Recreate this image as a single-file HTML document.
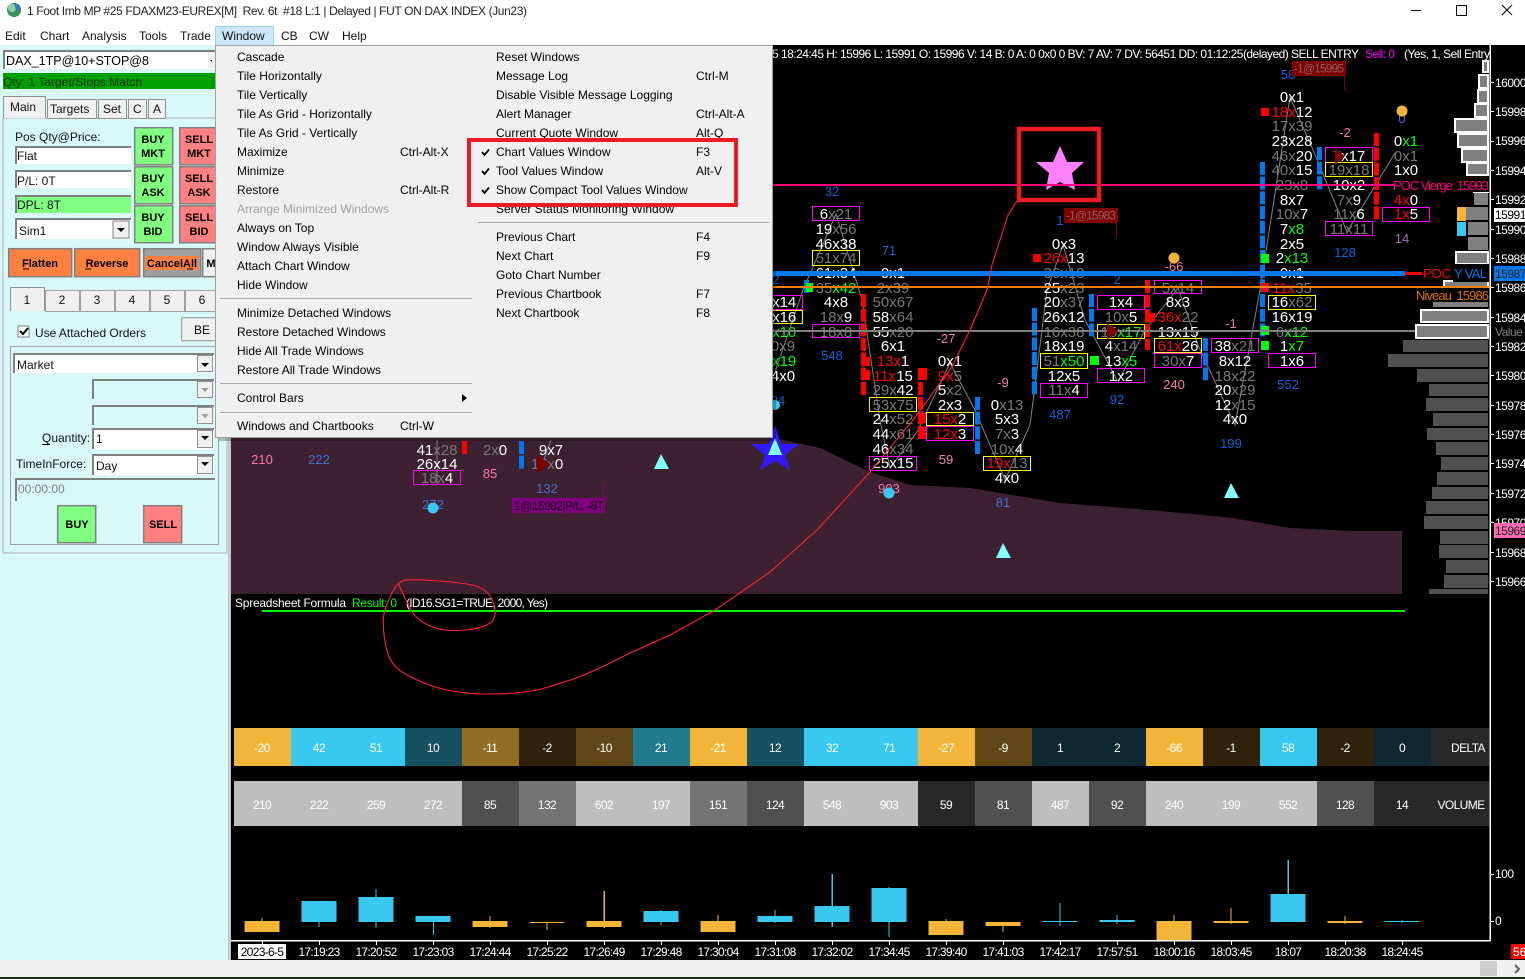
<!DOCTYPE html>
<html><head><meta charset="utf-8"><title>Chart</title>
<style>
html,body{margin:0;padding:0;background:#000;width:1525px;height:979px;overflow:hidden}
svg{display:block;font-family:"Liberation Sans",sans-serif}
text{white-space:pre}
.f text{font-size:15px;fill:#fff;text-anchor:middle}
.g{fill:#787878}.r{fill:#f00}.l{fill:#0f0}.dr{fill:#c00}
.m text{font-size:12px;fill:#000}
.u text{font-size:12px;fill:#111}
.c text{font-size:12px;text-anchor:middle;fill:#fff;letter-spacing:-.6px}
.tl text{font-size:12px;text-anchor:middle;fill:#fff;letter-spacing:-.7px}
.sc text{font-size:12px;fill:#fff;letter-spacing:-.5px}
.b text{font-size:13px;text-anchor:middle;fill:#0a66d8}
.p text{font-size:13px;text-anchor:middle;fill:#f77aa8}
.btn{font-size:11px;font-weight:bold;fill:#000;text-anchor:middle}
</style></head><body>
<svg width="1525" height="979" viewBox="0 0 1525 979" xmlns="http://www.w3.org/2000/svg">
<rect width="1525" height="979" fill="#000"/>
<!-- title -->
<rect width="1525" height="45" fill="#fff"/>
<circle cx="14" cy="10" r="7" fill="#3b8f5a"/><circle cx="12" cy="8" r="4" fill="#8fd0a0"/><path d="M14 3a7 7 0 0 1 7 7h-5z" fill="#2f78b8"/>
<text x="27" y="15" font-size="12" fill="#222" textLength="500">1 Foot Imb MP #25 FDAXM23-EUREX[M]  Rev. 6t  #18 L:1 | Delayed | FUT ON DAX INDEX (Jun23)</text>
<path d="M1411 10.500h10" stroke="#000"/><rect x="1456.500" y="5.500" width="10" height="10" fill="none" stroke="#000"/><path d="M1502 5l10 10M1512 5l-10 10" stroke="#000"/>
<rect x="215.500" y="26.500" width="58" height="19" fill="#cce8ff" stroke="#99d1ff"/>
<g class="u"><text x="5" y="40">Edit</text><text x="40" y="40">Chart</text><text x="82" y="40">Analysis</text><text x="139" y="40">Tools</text><text x="180" y="40">Trade</text><text x="222" y="40">Window</text><text x="281" y="40">CB</text><text x="309" y="40">CW</text><text x="342" y="40">Help</text></g>

<!-- maroon area -->
<polygon points="231,430 770,437 820,448 870,472 910,485 970,488 1060,503 1150,510 1233,518 1290,528 1350,531 1402,531 1402,594 231,594" fill="#3e2130"/>

<!-- status -->
<text x="772" y="58" font-size="12" fill="#fff" textLength="587">5 18:24:45 H: 15996 L: 15991 O: 15996 V: 14 B: 0 A: 0 0x0 0 BV: 7 AV: 7 DV: 56451 DD: 01:12:25(delayed) SELL ENTRY</text>
<text x="1365" y="58" font-size="12" fill="#f0f" textLength="30">Sell: 0</text>
<text x="1404" y="58" font-size="12" fill="#fff" textLength="86">(Yes, 1, Sell Entry</text>

<!-- star -->
<polygon points="1060,146 1067,162 1084,162 1072,173 1075,190 1060,182 1046,190 1049,173 1036,162 1053,162" fill="#ff80ff"/>

<!-- profile bars -->
<g fill="#808080" stroke="#fff" stroke-width="2">
<rect x="1483" y="61" width="5" height="11"/><rect x="1479" y="75" width="9" height="13"/><rect x="1478" y="90" width="10" height="13"/><rect x="1475" y="104" width="13" height="13"/><rect x="1455" y="119" width="33" height="13"/><rect x="1458" y="134" width="30" height="13"/><rect x="1462" y="149" width="26" height="13"/><rect x="1467" y="163" width="21" height="12"/>
<rect x="1474" y="192" width="14" height="13" stroke="none"/><rect x="1465" y="207" width="23" height="13" stroke="none"/><rect x="1468" y="222" width="20" height="13" stroke="none"/><rect x="1468" y="237" width="20" height="13" stroke="none"/><rect x="1456" y="252" width="32" height="12"/><rect x="1444" y="281" width="44" height="13"/><rect x="1433" y="302" width="55" height="5" stroke="none"/>
<rect x="1421" y="310" width="67" height="12"/><rect x="1416" y="325" width="72" height="13"/></g>
<rect x="1473" y="192" width="16" height="1" fill="#fff"/>
<rect x="1457" y="207" width="9" height="14" fill="#f2b53a"/><rect x="1457" y="222" width="9" height="14" fill="#38c8f0"/>
<g fill="#505050">
<rect x="1403" y="340" width="85" height="12"/><rect x="1388" y="354" width="100" height="13"/><rect x="1417" y="369" width="71" height="13"/><rect x="1429" y="384" width="59" height="12"/><rect x="1426" y="398" width="62" height="13"/><rect x="1433" y="413" width="55" height="13"/><rect x="1427" y="428" width="61" height="12"/><rect x="1436" y="442" width="52" height="13"/><rect x="1441" y="457" width="47" height="13"/><rect x="1437" y="472" width="51" height="13"/><rect x="1432" y="487" width="56" height="12"/><rect x="1426" y="501" width="62" height="13"/><rect x="1424" y="516" width="64" height="13"/><rect x="1440" y="531" width="48" height="13"/><rect x="1439" y="545" width="49" height="13"/><rect x="1446" y="560" width="42" height="13"/><rect x="1444" y="575" width="44" height="13"/><rect x="1429" y="589" width="59" height="5"/></g>

<!-- thin zigzag lines -->
<g fill="none" stroke="#808080" stroke-width="1">
<polyline points="775,372 803,290 836,214 862,300 880,420 890,468 917,432 950,363 975,410 1005,480 1030,425 1047,290 1063,245 1085,320 1118,382 1145,330 1178,288 1198,345 1235,425 1260,290 1290,97 1313,150 1347,232 1395,153"/>
<polyline points="437,440 437,485" /><polyline points="551,440 540,470"/>
</g>

<!-- pink/blue labels -->
<g class="p">
<text x="262" y="464">210</text><text x="490" y="478">85</text><text x="946" y="464">59</text><text x="946" y="343">-27</text><text x="1003" y="387">-9</text><text x="1174" y="271">-66</text><text x="1231" y="328">-1</text><text x="1345" y="137">-2</text><text x="1174" y="389" >240</text><text x="889" y="493">903</text></g>
<g class="b">
<text x="319" y="464" style="fill:#3f6fd8">222</text><text x="433" y="509" style="fill:#3f6fd8">272</text><text x="547" y="493" style="fill:#3f6fd8">132</text><text x="832" y="360">548</text><text x="1003" y="507" style="fill:#3f6fd8">81</text><text x="1060" y="419">487</text><text x="1117" y="404">92</text><text x="1231" y="448">199</text><text x="1288" y="389">552</text><text x="1345" y="257">128</text><text x="889" y="255">71</text><text x="832" y="196">32</text><text x="1060" y="225">1</text><text x="1117" y="284">2</text><text x="1288" y="79">58</text><text x="1402" y="123" style="fill:#4a6fd0">0</text><text x="1402" y="243" style="fill:#a070c0">14</text><text x="778" y="405">34</text><text x="776" y="284">2</text></g>

<!-- bars -->
<g fill="none" stroke-width="5" stroke-dasharray="13 1.67">
<g stroke="#0078f0"><path d="M1034.500 308V396M1091.500 294V337M977.500 397V455M1205.500 338V381M1262.500 162V337M1319.500 147V191M521.500 441V469M806.500 280V293"/></g>
<g stroke="#f00"><path d="M1376.500 133V220M863.500 294V396M920.500 382V439M1147.500 280V350M464.500 441V455"/></g>
</g>
<g fill="#f00"><rect x="861" y="357" width="9" height="9"/><rect x="861" y="370" width="9" height="10"/><rect x="918" y="368" width="9" height="12"/><rect x="918" y="413" width="9" height="10"/><rect x="918" y="427" width="9" height="12"/><rect x="1033" y="254" width="8" height="8"/><rect x="1261" y="108" width="8" height="8"/><rect x="1261" y="283" width="8" height="9"/><rect x="1147" y="313" width="8" height="9"/></g>
<g fill="#0f0"><rect x="1261" y="254" width="8" height="9"/><rect x="1261" y="326" width="8" height="9"/><rect x="1261" y="341" width="8" height="9"/><rect x="1090" y="356" width="9" height="9"/><rect x="806" y="283" width="7" height="9"/></g>

<!-- boxes -->
<g fill="none" stroke-width="1">
<g stroke="#ff00ff">
<rect x="812.500" y="206.500" width="47" height="14"/><rect x="812.500" y="324.500" width="47" height="13"/><rect x="869.500" y="456.500" width="47" height="14"/><rect x="926.500" y="426.500" width="47" height="14"/><rect x="1040.500" y="383.500" width="47" height="14"/><rect x="1097.500" y="295.500" width="47" height="14"/><rect x="1097.500" y="368.500" width="47" height="14"/><rect x="1154.500" y="280.500" width="47" height="13"/><rect x="1154.500" y="353.500" width="47" height="14"/><rect x="1211.500" y="338.500" width="47" height="14"/><rect x="1268.500" y="353.500" width="47" height="14"/><rect x="1325.500" y="147.500" width="47" height="15"/><rect x="1325.500" y="221.500" width="47" height="14"/><rect x="1382.500" y="207.500" width="47" height="14"/><rect x="755.500" y="295.500" width="47" height="14"/><rect x="413.500" y="470.500" width="47" height="14"/></g>
<g stroke="#ffff00">
<rect x="812.500" y="250.500" width="47" height="15"/><rect x="869.500" y="397.500" width="47" height="14"/><rect x="926.500" y="412.500" width="47" height="13"/><rect x="983.500" y="456.500" width="47" height="14"/><rect x="1040.500" y="353.500" width="47" height="15"/><rect x="1097.500" y="324.500" width="47" height="14"/><rect x="1154.500" y="338.500" width="47" height="14"/><rect x="1268.500" y="295.500" width="47" height="14"/><rect x="1325.500" y="162.500" width="47" height="14"/><rect x="755.500" y="310.500" width="47" height="13"/></g>
</g>

<!-- footprint text -->
<g class="f">
<text x="780" y="307">5x14</text><text x="780" y="322">8x16</text><text x="780" y="337" style="fill:#0f0">1x10</text><text x="783" y="351"><tspan class="g">0x9</tspan></text><text x="780" y="366"><tspan class="l">7x19</tspan></text><text x="783" y="381">4x0</text>
<text x="437" y="455">41<tspan class="g">x28</tspan></text><text x="437" y="469">26x14</text><text x="437" y="483"><tspan class="g">18x</tspan>4</text>
<text x="495" y="455"><tspan class="g">2x</tspan>0</text><text x="551" y="455">9x7</text><text x="547" y="469"><tspan class="g">17</tspan><tspan class="g">x</tspan>0</text>

<text x="836" y="219">6<tspan class="g">x21</tspan></text><text x="836" y="234">19<tspan class="g">x56</tspan></text><text x="836" y="249">46x38</text><text x="836" y="263"><tspan class="g">51x74</tspan></text><text x="836" y="278">61x34</text><text x="836" y="293"><tspan class="g">35</tspan><tspan class="l">x42</tspan></text><text x="836" y="307">4x8</text><text x="836" y="322"><tspan class="g">18x</tspan>9</text><text x="836" y="337"><tspan class="g">18x8</tspan></text>

<text x="893" y="278">0x1</text><text x="893" y="293"><tspan class="g">2x39</tspan></text><text x="893" y="307"><tspan class="g">50x67</tspan></text><text x="893" y="322">58<tspan class="g">x64</tspan></text><text x="893" y="337">55<tspan class="g">x20</tspan></text><text x="893" y="351">6x1</text><text x="893" y="366"><tspan class="r">13x</tspan>1</text><text x="893" y="381"><tspan class="r">11x</tspan>15</text><text x="893" y="395"><tspan class="g">29x</tspan>42</text><text x="893" y="410"><tspan class="g">53x75</tspan></text><text x="893" y="424">24<tspan class="g">x52</tspan></text><text x="893" y="439">44<tspan class="g">x61</tspan></text><text x="893" y="454">46<tspan class="g">x34</tspan></text><text x="893" y="468">25x15</text>

<text x="950" y="366">0x1</text><text x="950" y="381"><tspan class="r">9x</tspan><tspan class="g">5</tspan></text><text x="950" y="395">5<tspan class="g">x2</tspan></text><text x="950" y="410">2x3</text><text x="950" y="424"><tspan class="r">15x</tspan>2</text><text x="950" y="439"><tspan class="r">12x</tspan>3</text>

<text x="1007" y="410">0<tspan class="g">x13</tspan></text><text x="1007" y="424">5x3</text><text x="1007" y="439"><tspan class="g">7x</tspan>3</text><text x="1007" y="454"><tspan class="g">10x</tspan>4</text><text x="1007" y="468"><tspan class="r">19x</tspan><tspan class="g">13</tspan></text><text x="1007" y="483">4x0</text>

<text x="1064" y="249">0x3</text><text x="1064" y="263"><tspan class="r">26x</tspan>13</text><text x="1064" y="278"><tspan class="g">36x18</tspan></text><text x="1064" y="293">25<tspan class="g">x23</tspan></text><text x="1064" y="307">20<tspan class="g">x37</tspan></text><text x="1064" y="322">26x12</text><text x="1064" y="337"><tspan class="g">16x38</tspan></text><text x="1064" y="351">18x19</text><text x="1064" y="366"><tspan class="g">51</tspan><tspan class="l">x50</tspan></text><text x="1064" y="381">12x5</text><text x="1064" y="395"><tspan class="g">11x</tspan>4</text>

<text x="1121" y="307">1x4</text><text x="1121" y="322"><tspan class="g">10x</tspan>5</text><text x="1121" y="337"><tspan class="g">15</tspan><tspan class="l">x17</tspan></text><text x="1121" y="351">4<tspan class="g">x14</tspan></text><text x="1121" y="366">13<tspan class="l">x5</tspan></text><text x="1121" y="381">1x2</text>

<text x="1178" y="293"><tspan class="g">5x14</tspan></text><text x="1178" y="307">8x3</text><text x="1178" y="322"><tspan class="r">36x</tspan><tspan class="g">22</tspan></text><text x="1178" y="337">13x15</text><text x="1178" y="351"><tspan class="r">61x</tspan>26</text><text x="1178" y="366"><tspan class="g">30x</tspan>7</text>

<text x="1235" y="351">38<tspan class="g">x21</tspan></text><text x="1235" y="366">8x12</text><text x="1235" y="381"><tspan class="g">18x22</tspan></text><text x="1235" y="395">20<tspan class="g">x29</tspan></text><text x="1235" y="410">12<tspan class="g">x15</tspan></text><text x="1235" y="424">4x0</text>

<text x="1292" y="102">0x1</text><text x="1292" y="117"><tspan class="r">18x</tspan>12</text><text x="1292" y="131"><tspan class="g">17x39</tspan></text><text x="1292" y="146">23x28</text><text x="1292" y="161"><tspan class="g">46x</tspan>20</text><text x="1292" y="175"><tspan class="g">40x</tspan>15</text><text x="1292" y="190"><tspan class="g">23x8</tspan></text><text x="1292" y="205">8x7</text><text x="1292" y="219"><tspan class="g">10x</tspan>7</text><text x="1292" y="234">7<tspan class="l">x8</tspan></text><text x="1292" y="249">2x5</text><text x="1292" y="263">2<tspan class="l">x13</tspan></text><text x="1292" y="278">0x1</text><text x="1292" y="293"><tspan class="r">11x</tspan><tspan class="g">35</tspan></text><text x="1292" y="307">16<tspan class="g">x62</tspan></text><text x="1292" y="322">16x19</text><text x="1292" y="337"><tspan class="g">6</tspan><tspan class="l">x12</tspan></text><text x="1292" y="351">1<tspan class="l">x7</tspan></text><text x="1292" y="366">1x6</text>

<text x="1349" y="161"><tspan class="g">7</tspan>x17</text><text x="1349" y="175"><tspan class="g">19x18</tspan></text><text x="1349" y="190">10x2</text><text x="1349" y="205"><tspan class="g">7x</tspan>9</text><text x="1349" y="219"><tspan class="g">11x</tspan>6</text><text x="1349" y="234"><tspan class="g">11x11</tspan></text>

<text x="1406" y="146">0<tspan class="l">x1</tspan></text><text x="1406" y="161"><tspan class="g">0x1</tspan></text><text x="1406" y="175">1x0</text><text x="1406" y="205"><tspan class="r">4x</tspan>0</text><text x="1406" y="219"><tspan class="r">1x</tspan>5</text>
</g>

<!-- horizontal lines over footprint text -->
<rect x="772" y="184" width="623" height="2" fill="#ff0080"/>
<rect x="231" y="271" width="1174" height="5" fill="#0078f0"/>
<rect x="1405" y="272" width="17" height="3" fill="#f00"/>
<rect x="231" y="286" width="1259" height="2" fill="#ff8000"/>
<rect x="231" y="330" width="1184" height="2" fill="#808080"/>
<rect x="1489.500" y="45" width="1.500" height="896" fill="#fff"/>

<!-- dark red arrows -->
<g fill="#800000"><polygon points="1335,148 1345,156 1335,165"/><polygon points="1107,323 1118,331 1107,340"/><polygon points="537,455 550,464 537,473"/></g>

<!-- order labels -->
<rect x="1064" y="208" width="54" height="15" fill="#800000"/><path d="M1116.500 223v15" stroke="#800000"/>
<text x="1066" y="219.500" font-size="12" fill="#8a6060" textLength="50">-1@15983</text>
<rect x="1292" y="61" width="54" height="15" fill="#800000"/><path d="M1344.500 76v15" stroke="#800000"/>
<text x="1294" y="72.500" font-size="12" fill="#8a6060" textLength="50">-1@15995</text>
<rect x="512" y="498" width="93" height="15" fill="#800080"/><path d="M603.500 484v14" stroke="#800080"/>
<text x="514" y="510" font-size="12" fill="#111" textLength="90">1@15982|P/L: -8T</text>

<!-- markers -->
<circle cx="433" cy="508" r="5.500" fill="#38c8f0"/><circle cx="889" cy="493" r="5.500" fill="#38c8f0"/><circle cx="775" cy="405" r="5" fill="#38c8f0"/>
<circle cx="1402" cy="111" r="5.500" fill="#f2b53a"/><circle cx="1174" cy="258" r="5.500" fill="#f2b53a"/>
<polygon points="775,425 781,444 799,444 785,455 790,470 775,461 760,470 765,455 751,444 769,444" fill="#3018ff"/>
<polygon points="775,438 782,455 768,455" fill="#80ffff"/>
<g fill="#80ffff"><polygon points="661,454 669,469 654,469"/><polygon points="1003,543 1011,558 996,558"/><polygon points="1231,483 1239,498 1224,498"/></g>

<!-- right overlay labels -->
<text x="1393" y="190" font-size="13" fill="#ff0080" textLength="96">POC Vierge  15993</text>
<text x="1423" y="278" font-size="13" fill="#f00">POC</text>
<rect x="1453" y="264" width="36" height="18" fill="#000"/>
<text x="1454" y="278" font-size="13" fill="#0078f0" textLength="33">Y VAL</text>
<rect x="1415" y="288" width="74" height="14" fill="#000"/>
<text x="1416" y="300" font-size="13" fill="#e07000" textLength="73">Niveau  15986</text>

<!-- star box -->
<rect x="1019" y="129" width="80" height="71" fill="none" stroke="#ed1c24" stroke-width="4.500"/>

<!-- scale -->
<g class="sc">
<text x="1495" y="87">16000</text><text x="1495" y="116">15998</text><text x="1495" y="145">15996</text><text x="1495" y="175">15994</text><text x="1495" y="204">15992</text><text x="1495" y="234">15990</text><text x="1495" y="263">15988</text><text x="1495" y="292">15986</text><text x="1495" y="322">15984</text><text x="1495" y="351">15982</text><text x="1495" y="380">15980</text><text x="1495" y="410">15978</text><text x="1495" y="439">15976</text><text x="1495" y="468">15974</text><text x="1495" y="498">15972</text><text x="1495" y="527">15970</text><text x="1495" y="557">15968</text><text x="1495" y="586">15966</text><text x="1495" y="336" style="fill:#808080">Value</text>
<text x="1495" y="878">100</text><text x="1495" y="925">0</text>
</g>
<g stroke="#fff"><path d="M1491 82.500h3M1491 111.500h3M1491 141.500h3M1491 170.500h3M1491 199.500h3M1491 229.500h3M1491 258.500h3M1491 287.500h3M1491 317.500h3M1491 346.500h3M1491 375.500h3M1491 405.500h3M1491 434.500h3M1491 463.500h3M1491 493.500h3M1491 522.500h3M1491 552.500h3M1491 581.500h3M1491 874.500h3M1491 921.500h3"/></g>
<rect x="1494" y="208" width="31" height="14" fill="#fff"/><text x="1495" y="219" font-size="12" letter-spacing="-.5" fill="#000">15991</text>
<rect x="1494" y="266" width="31" height="15" fill="#0078f0"/><text x="1495" y="278" font-size="12" letter-spacing="-.5" fill="#222">15987</text>
<rect x="1494" y="523" width="31" height="15" fill="#ff69b4"/><text x="1495" y="535" font-size="12" letter-spacing="-.5" fill="#222">15969</text>

<!-- lower pane -->
<text x="235" y="607" font-size="12" fill="#fff" textLength="111">Spreadsheet Formula</text>
<text x="352" y="607" font-size="12" fill="#0f0" textLength="45">Result: 0</text>
<text x="406" y="607" font-size="12" fill="#fff" textLength="142">(ID16.SG1=TRUE, 2000, Yes)</text>
<rect x="262" y="610" width="1143" height="2" fill="#0f0"/>

<!-- freehand red -->
<path fill="none" stroke="#ff2030" stroke-width="1.100" stroke-linejoin="round" d="M1017,201 L1008,215 L1000,240 L992,265 L987,290 L970,330 L952,367 L913,420 L870,472 L818,529 L770,572 L715,610 L670,635 L630,653 Q597,670 580,676.500 Q563,683 543,688.500 Q523,694 488,694 Q453,694 428,684.500 Q403,675 395,666 Q387,657 384.500,638.500 Q382,620 384.500,611.500 Q387,603 392,593 Q397,583 402,581 Q407,579 432,580.500 Q457,582 472,585 Q487,588 492.500,600.500 Q498,613 492.500,620.500 Q487,628 465,630 Q443,632 430,626 Q417,620 412,611.500 Q407,603 398,583"/>

<!-- delta row -->
<g>
<rect x="234" y="728" width="57" height="38" fill="#f2b53a"/><rect x="291" y="728" width="114" height="38" fill="#38c8f0"/><rect x="405" y="728" width="57" height="38" fill="#17505f"/><rect x="462" y="728" width="57" height="38" fill="#926e22"/><rect x="519" y="728" width="57" height="38" fill="#31230b"/><rect x="576" y="728" width="57" height="38" fill="#5f4716"/><rect x="633" y="728" width="57" height="38" fill="#227a91"/><rect x="690" y="728" width="57" height="38" fill="#f2b53a"/><rect x="747" y="728" width="57" height="38" fill="#17505f"/><rect x="804" y="728" width="114" height="38" fill="#38c8f0"/><rect x="918" y="728" width="57" height="38" fill="#f2b53a"/><rect x="975" y="728" width="57" height="38" fill="#5f4716"/><rect x="1032" y="728" width="114" height="38" fill="#0d2830"/><rect x="1146" y="728" width="57" height="38" fill="#f2b53a"/><rect x="1203" y="728" width="57" height="38" fill="#31230b"/><rect x="1260" y="728" width="57" height="38" fill="#38c8f0"/><rect x="1317" y="728" width="57" height="38" fill="#31230b"/><rect x="1374" y="728" width="57" height="38" fill="#0d2830"/><rect x="1431" y="728" width="58" height="38" fill="#282828"/>
<rect x="234" y="781" width="228" height="45" fill="#bebebe"/><rect x="462" y="781" width="57" height="45" fill="#505050"/><rect x="519" y="781" width="57" height="45" fill="#747474"/><rect x="576" y="781" width="114" height="45" fill="#bebebe"/><rect x="690" y="781" width="57" height="45" fill="#747474"/><rect x="747" y="781" width="57" height="45" fill="#505050"/><rect x="804" y="781" width="114" height="45" fill="#bebebe"/><rect x="918" y="781" width="57" height="45" fill="#282828"/><rect x="975" y="781" width="57" height="45" fill="#505050"/><rect x="1032" y="781" width="57" height="45" fill="#bebebe"/><rect x="1089" y="781" width="57" height="45" fill="#505050"/><rect x="1146" y="781" width="171" height="45" fill="#bebebe"/><rect x="1317" y="781" width="57" height="45" fill="#505050"/><rect x="1374" y="781" width="115" height="45" fill="#282828"/>
</g>
<g class="c">
<text x="262" y="752">-20</text><text x="319" y="752">42</text><text x="376" y="752">51</text><text x="433" y="752">10</text><text x="490" y="752">-11</text><text x="547" y="752">-2</text><text x="604" y="752">-10</text><text x="661" y="752">21</text><text x="718" y="752">-21</text><text x="775" y="752">12</text><text x="832" y="752">32</text><text x="889" y="752">71</text><text x="946" y="752">-27</text><text x="1003" y="752">-9</text><text x="1060" y="752">1</text><text x="1117" y="752">2</text><text x="1174" y="752">-66</text><text x="1231" y="752">-1</text><text x="1288" y="752">58</text><text x="1345" y="752">-2</text><text x="1402" y="752">0</text><text x="1468" y="752">DELTA</text>
<text x="262" y="809">210</text><text x="319" y="809">222</text><text x="376" y="809">259</text><text x="433" y="809">272</text><text x="490" y="809">85</text><text x="547" y="809">132</text><text x="604" y="809">602</text><text x="661" y="809">197</text><text x="718" y="809">151</text><text x="775" y="809">124</text><text x="832" y="809">548</text><text x="889" y="809">903</text><text x="946" y="809">59</text><text x="1003" y="809">81</text><text x="1060" y="809">487</text><text x="1117" y="809">92</text><text x="1174" y="809">240</text><text x="1231" y="809">199</text><text x="1288" y="809">552</text><text x="1345" y="809">128</text><text x="1402" y="809">14</text><text x="1461" y="809">VOLUME</text>
</g>

<!-- candles -->
<g fill="#f2b53a">
<rect x="244.500" y="921" width="35" height="11"/><rect x="261.500" y="918" width="1" height="3"/>
<rect x="472.500" y="921" width="35" height="6"/><rect x="489.500" y="916" width="1" height="12"/>
<rect x="529.500" y="922" width="35" height="1"/><rect x="546.500" y="923" width="1" height="7"/>
<rect x="586.500" y="921" width="35" height="6"/><rect x="603.500" y="891" width="1.500" height="37"/>
<rect x="700.500" y="921" width="35" height="11"/><rect x="717.500" y="915" width="1" height="6"/>
<rect x="928.500" y="921" width="35" height="14"/><rect x="945.500" y="919" width="1" height="2"/>
<rect x="985.500" y="922" width="35" height="4"/><rect x="1002.500" y="926" width="1" height="6"/>
<rect x="1156.500" y="921" width="35" height="19"/><rect x="1173.500" y="915" width="1" height="6"/>
<rect x="1213.500" y="921" width="35" height="2"/><rect x="1230.500" y="908" width="1" height="16"/>
<rect x="1327.500" y="921" width="35" height="2"/><rect x="1344.500" y="916" width="1" height="8"/>
</g>
<g fill="#38c8f0">
<rect x="301.500" y="901" width="35" height="21"/><rect x="318.500" y="922" width="1" height="5"/>
<rect x="358.500" y="897" width="35" height="25"/><rect x="375.500" y="889" width="1" height="39"/>
<rect x="415.500" y="916" width="35" height="6"/><rect x="433" y="922" width="1" height="13"/>
<rect x="643.500" y="911" width="35" height="11"/><rect x="660.500" y="910" width="1" height="15"/>
<rect x="757.500" y="916" width="35" height="6"/><rect x="774.500" y="910" width="1" height="13"/>
<rect x="814.500" y="906" width="35" height="16"/><rect x="831.500" y="874" width="1.500" height="53"/>
<rect x="871.500" y="888" width="35" height="34"/><rect x="888.500" y="887" width="1" height="50"/>
<rect x="1042.500" y="921" width="35" height="1"/><rect x="1059.500" y="903" width="1" height="23"/>
<rect x="1099.500" y="920" width="35" height="2"/><rect x="1116.500" y="915" width="1" height="9"/>
<rect x="1270.500" y="894" width="35" height="28"/><rect x="1287.500" y="860" width="1.500" height="34"/>
<rect x="1384.500" y="921" width="35" height="1"/><rect x="1401.500" y="920" width="1" height="3"/>
</g>

<!-- time axis -->
<rect x="231" y="940" width="1260" height="1.500" fill="#fff"/>
<path stroke="#fff" d="M262.500 941v4M319.500 941v4M376.500 941v4M433.500 941v4M490.500 941v4M547.500 941v4M604.500 941v4M661.500 941v4M718.500 941v4M775.500 941v4M832.500 941v4M889.500 941v4M946.500 941v4M1003.500 941v4M1060.500 941v4M1117.500 941v4M1174.500 941v4M1231.500 941v4M1288.500 941v4M1345.500 941v4M1402.500 941v4"/>
<rect x="238" y="944" width="48" height="15" fill="#fff"/>
<g class="tl">
<text x="262" y="956" style="fill:#000">2023-6-5</text><text x="319" y="956">17:19:23</text><text x="376" y="956">17:20:52</text><text x="433" y="956">17:23:03</text><text x="490" y="956">17:24:44</text><text x="547" y="956">17:25:22</text><text x="604" y="956">17:26:49</text><text x="661" y="956">17:29:48</text><text x="718" y="956">17:30:04</text><text x="775" y="956">17:31:08</text><text x="832" y="956">17:32:02</text><text x="889" y="956">17:34:45</text><text x="946" y="956">17:39:40</text><text x="1003" y="956">17:41:03</text><text x="1060" y="956">17:42:17</text><text x="1117" y="956">17:57:51</text><text x="1174" y="956">18:00:16</text><text x="1231" y="956">18:03:45</text><text x="1288" y="956">18:07</text><text x="1345" y="956">18:20:38</text><text x="1402" y="956">18:24:45</text></g>
<rect x="1511" y="944" width="14" height="15" fill="#f00"/><text x="1513" y="956" font-size="12" fill="#fff">56</text>

<!-- scrollbar -->
<rect x="0" y="960" width="1525" height="17" fill="#f0f0f0"/>
<rect x="1480" y="961" width="17" height="15" fill="#cdcdcd"/>
<path d="M1515 965l4 4-4 4" fill="none" stroke="#606060" stroke-width="2"/>
<rect x="0" y="977" width="1525" height="2" fill="#1a2a12"/>

<!-- left panel -->
<rect x="0" y="45" width="228" height="915" fill="#d9f9f9"/>
<rect x="228" y="45" width="3" height="915" fill="#c8c8c8"/>
<rect x="3" y="50" width="212" height="19" fill="#808080"/><rect x="5" y="52" width="210" height="17" fill="#fff"/>
<text x="6" y="65" font-size="12.500" fill="#000">DAX_1TP@10+STOP@8</text>
<rect x="208" y="52" width="7" height="16" fill="#f0f0f0"/><path d="M212 60l-2 0 2 2z" fill="#000"/>
<rect x="3" y="73" width="213" height="16" fill="#00a000"/>
<text x="3" y="86" font-size="12" fill="#003000" textLength="139">Qty: 1 Target/Stops Match</text>

<!-- tabs -->
<rect x="3" y="118" width="224" height="435" fill="#d9f9f9" stroke="#b0b0b0"/>
<g fill="#f0f0f0" stroke="#909090">
<rect x="47.500" y="99.500" width="49" height="19"/><rect x="98.500" y="99.500" width="28" height="19"/><rect x="128.500" y="99.500" width="18" height="19"/><rect x="148.500" y="99.500" width="17" height="19"/></g>
<path d="M3.500 118V96.500H45.500V118" fill="#f0f0f0" stroke="#909090"/>
<g class="u">
<text x="10" y="111">Main</text><text x="50" y="113">Targets</text><text x="103" y="113">Set</text><text x="133" y="113">C</text><text x="153" y="113">A</text>
<text x="15" y="141">Pos Qty@Price:</text>
</g>
<rect x="15" y="146" width="116" height="18" fill="#808080"/><rect x="17" y="148" width="114" height="16" fill="#fff"/>
<rect x="15" y="170" width="116" height="18" fill="#808080"/><rect x="17" y="172" width="114" height="16" fill="#fff"/>
<rect x="15" y="195" width="116" height="18" fill="#808080"/><rect x="17" y="197" width="114" height="16" fill="#80ff80"/>
<rect x="15" y="218" width="116" height="21" fill="#808080"/><rect x="17" y="220" width="114" height="19" fill="#fff"/>
<rect x="113" y="221" width="16" height="17" fill="#f0f0f0" stroke="#808080"/><polygon points="117,228 125,228 121,232" fill="#000"/>
<g class="u"><text x="17" y="160">Flat</text><text x="17" y="185">P/L: 0T</text><text x="17" y="209">DPL: 8T</text><text x="19" y="235">Sim1</text></g>

<!-- trade buttons -->
<g stroke="#808080" stroke-width="1.500">
<rect x="134.700" y="127.700" width="38" height="37" fill="#80ff80"/><rect x="134.700" y="166.700" width="38" height="37" fill="#80ff80"/><rect x="134.700" y="205.700" width="38" height="37" fill="#80ff80"/>
<rect x="179.700" y="127.700" width="38" height="37" fill="#ff8080"/><rect x="179.700" y="166.700" width="38" height="37" fill="#ff8080"/><rect x="179.700" y="205.700" width="38" height="37" fill="#ff8080"/></g>
<text class="btn" x="153" y="143">BUY</text><text class="btn" x="153" y="157">MKT</text><text class="btn" x="153" y="182">BUY</text><text class="btn" x="153" y="196">ASK</text><text class="btn" x="153" y="221">BUY</text><text class="btn" x="153" y="235">BID</text>
<text class="btn" x="199" y="143">SELL</text><text class="btn" x="199" y="157">MKT</text><text class="btn" x="199" y="182">SELL</text><text class="btn" x="199" y="196">ASK</text><text class="btn" x="199" y="221">SELL</text><text class="btn" x="199" y="235">BID</text>

<g stroke="#808080" stroke-width="1.500">
<rect x="8.700" y="248.700" width="63" height="28" fill="#ff8040"/><rect x="74.700" y="248.700" width="65" height="28" fill="#ff8040"/><rect x="143.700" y="248.700" width="57" height="28" fill="#a0a0a0"/><rect x="202.700" y="248.700" width="14" height="28" fill="#f0f0f0"/></g>
<rect x="145" y="256" width="53" height="14" fill="#ff8040"/>
<text class="btn" x="40" y="267">Flatten</text><text class="btn" x="107" y="267">Reverse</text><text class="btn" x="172" y="267">CancelAll</text><text class="btn" x="211" y="267" font-size="12">M</text>
<path stroke="#000" d="M23 269h6M85 269h6M187 269h6"/>

<!-- numbers -->
<g fill="#f0f0f0" stroke="#a0a0a0">
<rect x="45.500" y="290.500" width="34" height="21"/><rect x="80.500" y="290.500" width="34" height="21"/><rect x="115.500" y="290.500" width="34" height="21"/><rect x="150.500" y="290.500" width="34" height="21"/><rect x="185.500" y="290.500" width="30" height="21"/></g>
<path d="M10.500 311V287.500H44.500V311" fill="#f0f0f0" stroke="#909090"/>
<g class="u" text-anchor="middle"><text x="27" y="304">1</text><text x="62" y="304">2</text><text x="97" y="304">3</text><text x="132" y="304">4</text><text x="167" y="304">5</text><text x="202" y="304">6</text></g>
<rect x="181.700" y="317.700" width="34" height="23" fill="#f0f0f0" stroke="#909090"/><text x="194" y="334" font-size="12" fill="#000">BE</text>
<rect x="18" y="326" width="11" height="11" fill="#fff" stroke="#808080"/><path d="M20 331l3 3 5-6" fill="none" stroke="#000" stroke-width="2"/>
<text x="35" y="337" font-size="12" fill="#111" textLength="111">Use Attached Orders</text>

<rect x="10.500" y="346.500" width="208" height="198" fill="none" stroke="#a0a0a0"/>
<rect x="13" y="353" width="201" height="20" fill="#808080"/><rect x="15" y="355" width="199" height="18" fill="#fff"/>
<rect x="92" y="379" width="122" height="20" fill="#808080"/><rect x="94" y="381" width="120" height="18" fill="#d9f9f9"/>
<rect x="92" y="405" width="122" height="20" fill="#808080"/><rect x="94" y="407" width="120" height="18" fill="#d9f9f9"/>
<rect x="92" y="428" width="122" height="21" fill="#808080"/><rect x="94" y="430" width="120" height="19" fill="#fff"/>
<rect x="92" y="454" width="122" height="21" fill="#808080"/><rect x="94" y="456" width="120" height="19" fill="#fff"/>
<rect x="15" y="478" width="200" height="23" fill="#808080"/><rect x="17" y="480" width="198" height="21" fill="#d9f9f9"/>
<g fill="#f0f0f0" stroke="#909090"><rect x="197.500" y="355.500" width="15" height="16"/><rect x="197.500" y="381.500" width="15" height="16"/><rect x="197.500" y="407.500" width="15" height="16"/><rect x="197.500" y="430.500" width="15" height="17"/><rect x="197.500" y="456.500" width="15" height="17"/></g>
<g fill="#000"><polygon points="201,363 209,363 205,367"/><polygon points="201,436 209,436 205,440"/><polygon points="201,462 209,462 205,466"/></g>
<g fill="#a0a0a0"><polygon points="201,388 209,388 205,392"/><polygon points="201,414 209,414 205,418"/></g>
<g class="u"><text x="17" y="369">Market</text><text x="96" y="443">1</text><text x="96" y="470">Day</text><text x="16" y="468">TimeInForce:</text><text x="42" y="442">Quantity:</text></g>
<path stroke="#000" d="M42 444.500h8"/>
<text x="18" y="493" font-size="12" fill="#808080">00:00:00</text>
<rect x="57.700" y="505.700" width="38" height="37" fill="#80ff80" stroke="#808080" stroke-width="1.500"/><rect x="143.700" y="505.700" width="38" height="37" fill="#ff8080" stroke="#808080" stroke-width="1.500"/>
<text class="btn" x="77" y="528">BUY</text><text class="btn" x="163" y="528">SELL</text>

<!-- menu -->
<rect x="219" y="49" width="557" height="392" fill="#000" opacity=".25"/>
<rect x="215.500" y="45.500" width="557" height="392" fill="#f0f0f0" stroke="#a0a0a0"/>
<g class="m">
<text x="237" y="61">Cascade</text><text x="237" y="80">Tile Horizontally</text><text x="237" y="99">Tile Vertically</text><text x="237" y="118">Tile As Grid - Horizontally</text><text x="237" y="137">Tile As Grid - Vertically</text><text x="237" y="156">Maximize</text><text x="400" y="156">Ctrl-Alt-X</text><text x="237" y="175">Minimize</text><text x="237" y="194">Restore</text><text x="400" y="194">Ctrl-Alt-R</text><text x="237" y="213" style="fill:#a0a0a0">Arrange Minimized Windows</text><text x="237" y="232">Always on Top</text><text x="237" y="251">Window Always Visible</text><text x="237" y="270">Attach Chart Window</text><text x="237" y="289">Hide Window</text>
<text x="237" y="317">Minimize Detached Windows</text><text x="237" y="336">Restore Detached Windows</text><text x="237" y="355">Hide All Trade Windows</text><text x="237" y="374">Restore All Trade Windows</text><text x="237" y="402">Control Bars</text><text x="237" y="430">Windows and Chartbooks</text><text x="400" y="430">Ctrl-W</text>
<text x="496" y="61">Reset Windows</text><text x="496" y="80">Message Log</text><text x="696" y="80">Ctrl-M</text><text x="496" y="99">Disable Visible Message Logging</text><text x="496" y="118">Alert Manager</text><text x="696" y="118">Ctrl-Alt-A</text><text x="496" y="137">Current Quote Window</text><text x="696" y="137">Alt-Q</text><text x="496" y="156">Chart Values Window</text><text x="696" y="156">F3</text><text x="496" y="175">Tool Values Window</text><text x="696" y="175">Alt-V</text><text x="496" y="194">Show Compact Tool Values Window</text><text x="496" y="213">Server Status Monitoring Window</text>
<text x="496" y="241">Previous Chart</text><text x="696" y="241">F4</text><text x="496" y="260">Next Chart</text><text x="696" y="260">F9</text><text x="496" y="279">Goto Chart Number</text><text x="496" y="298">Previous Chartbook</text><text x="696" y="298">F7</text><text x="496" y="317">Next Chartbook</text><text x="696" y="317">F8</text>
</g>
<g fill="#a8a8a8"><rect x="220" y="298" width="252" height="1"/><rect x="220" y="383" width="252" height="1"/><rect x="220" y="412" width="252" height="1"/><rect x="478" y="222" width="291" height="1"/></g>
<polygon points="462,394 467,398 462,402" fill="#000"/>
<g fill="none" stroke="#000" stroke-width="1.800"><path d="M482 152l2.500 3 4.500-5.500"/><path d="M482 171l2.500 3 4.500-5.500"/><path d="M482 190l2.500 3 4.500-5.500"/></g>
<rect x="469" y="140" width="267" height="65" fill="none" stroke="#ed1c24" stroke-width="4"/>
</svg>
</body></html>
